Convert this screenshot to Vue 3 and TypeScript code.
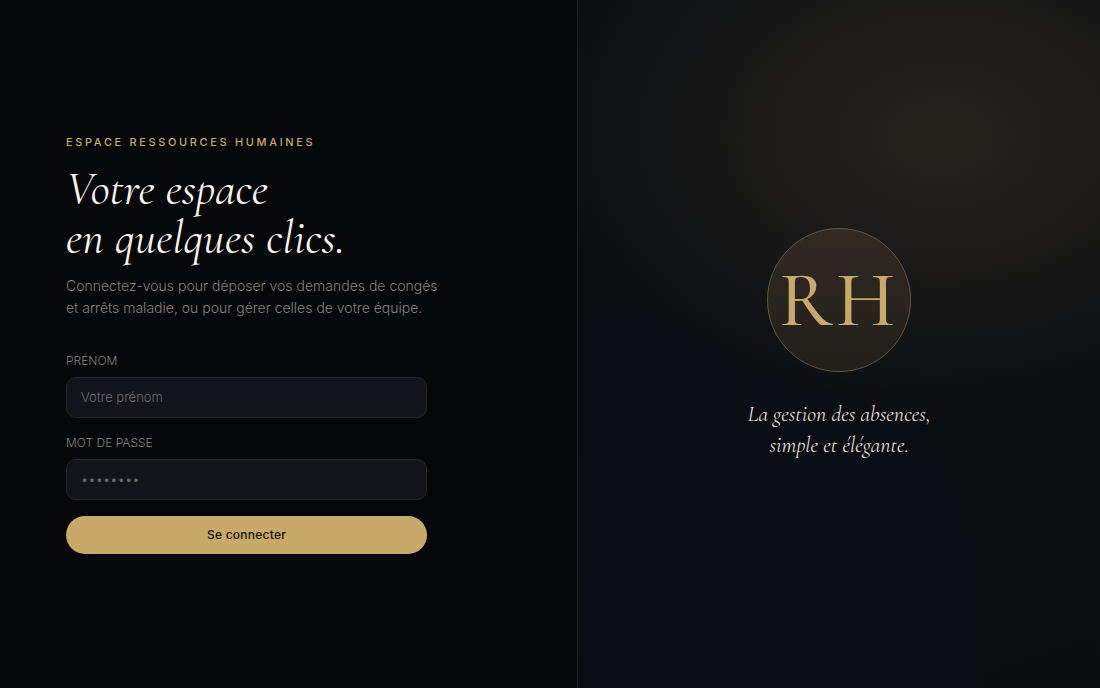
<script setup lang="ts">
import { ref } from 'vue'

const firstName = ref('')
const password = ref('')
</script>

<template>
  <main class="login">
    <section class="panel">
      <p class="eyebrow">Espace Ressources Humaines</p>
      <h1>Votre espace<br />en quelques clics.</h1>
      <p class="intro">
        Connectez-vous pour déposer vos demandes de congés et arrêts maladie, ou pour gérer celles de votre équipe.
      </p>
      <form @submit.prevent>
        <div class="field">
          <label for="first-name">Prénom</label>
          <input id="first-name" v-model="firstName" type="text" placeholder="Votre prénom" autocomplete="username" />
        </div>
        <div class="field">
          <label for="password">Mot de passe</label>
          <input id="password" v-model="password" type="password" placeholder="••••••••" autocomplete="current-password" />
        </div>
        <button type="submit">Se connecter</button>
      </form>
    </section>
    <aside class="brand">
      <div class="monogram">RH</div>
      <p class="tagline">La gestion des absences,<br />simple et élégante.</p>
    </aside>
  </main>
</template>

<style>
body {
  margin: 0;
  background: #050709;
}
</style>

<style scoped>
* {
  box-sizing: border-box;
}

.login {
  display: grid;
  grid-template-columns: 1.105fr 1fr;
  min-height: 100vh;
  background: #050709;
  color: #f6f3ec;
  font-family: Inter, "Liberation Sans", sans-serif;
}

.panel {
  display: flex;
  flex-direction: column;
  justify-content: center;
  padding: 32px 6vw;
}

.eyebrow {
  margin: 0 0 16px;
  color: #c8a96a;
  font-size: 11px;
  font-weight: 500;
  line-height: 14px;
  letter-spacing: 0.24em;
  text-transform: uppercase;
}

h1 {
  margin: 0 0 12px;
  font-family: "Cormorant Garamond", "Liberation Serif", serif;
  font-size: 47px;
  font-style: italic;
  font-weight: 400;
  line-height: 49px;
}

.intro {
  max-width: 380px;
  margin: 0 0 33px;
  color: #85827c;
  font-size: 14px;
  font-weight: 300;
  line-height: 22px;
}

form {
  display: flex;
  flex-direction: column;
  gap: 16px;
  max-width: 361px;
}

.field {
  display: flex;
  flex-direction: column;
  gap: 8px;
}

label {
  color: #85827c;
  font-size: 12px;
  font-weight: 300;
  line-height: 17px;
  text-transform: uppercase;
}

input {
  width: 100%;
  height: 41px;
  padding: 0 14px;
  border: 1px solid #24262b;
  border-radius: 10px;
  outline: none;
  background: #121419;
  color: #f6f3ec;
  font: 300 13px Inter, "Liberation Sans", sans-serif;
}

input::placeholder {
  color: #6b6b6d;
  opacity: 1;
}

input:focus {
  border-color: #c8a96a;
}

button {
  height: 38px;
  border: 0;
  border-radius: 19px;
  background: #c8a96a;
  color: #17130b;
  font: 500 12px Inter, "Liberation Sans", sans-serif;
  letter-spacing: 0.02em;
  cursor: pointer;
}

.brand {
  display: flex;
  flex-direction: column;
  align-items: center;
  justify-content: center;
  gap: 27px;
  border-left: 1px solid #202224;
  background:
    radial-gradient(ellipse 78% 42% at 70% 20%, rgba(200, 169, 106, 0.14), transparent),
    radial-gradient(ellipse 60% 50% at 20% 90%, rgba(40, 70, 110, 0.06), transparent),
    linear-gradient(160deg, #0c0e12, #090b0f);
}

.monogram {
  display: grid;
  place-items: center;
  width: 144px;
  height: 144px;
  border: 1px solid #62563d;
  border-radius: 50%;
  background: linear-gradient(#302a22, #211f1b);
  color: #c8a96a;
  font-family: "Cormorant Garamond", "Liberation Serif", serif;
  font-size: 78px;
  font-weight: 500;
  line-height: 1;
  letter-spacing: 0.05em;
}

.tagline {
  margin: 0;
  color: #e0deda;
  font-family: "Cormorant Garamond", "Liberation Serif", serif;
  font-size: 22px;
  font-style: italic;
  line-height: 31px;
  text-align: center;
}
</style>
